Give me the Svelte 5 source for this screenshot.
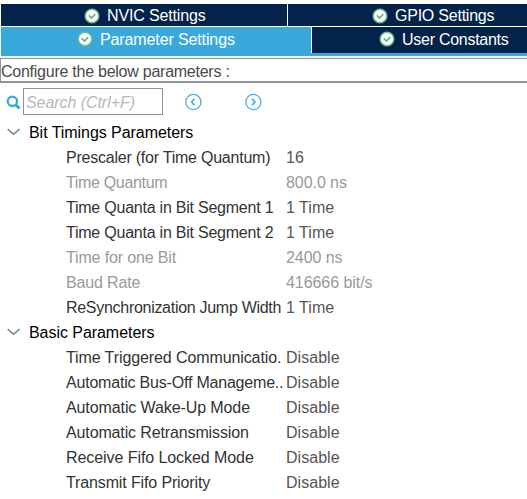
<script>
  // track: letter-spacing in px for each label
  const groups = [
    {
      name: 'Bit Timings Parameters',
      rows: [
        { label: 'Prescaler (for Time Quantum)', track: -0.23, value: '16' },
        { label: 'Time Quantum', track: -0.33, value: '800.0 ns', readonly: true },
        { label: 'Time Quanta in Bit Segment 1', track: -0.23, value: '1 Time' },
        { label: 'Time Quanta in Bit Segment 2', track: -0.23, value: '1 Time' },
        { label: 'Time for one Bit', track: -0.15, value: '2400 ns', readonly: true },
        { label: 'Baud Rate', track: -0.15, value: '416666 bit/s', readonly: true },
        { label: 'ReSynchronization Jump Width', track: -0.29, value: '1 Time' }
      ]
    },
    {
      name: 'Basic Parameters',
      rows: [
        { label: 'Time Triggered Communicatio.', track: -0.1, value: 'Disable' },
        { label: 'Automatic Bus-Off Manageme..', track: -0.2, value: 'Disable' },
        { label: 'Automatic Wake-Up Mode', track: -0.1, value: 'Disable' },
        { label: 'Automatic Retransmission', track: -0.13, value: 'Disable' },
        { label: 'Receive Fifo Locked Mode', track: -0.07, value: 'Disable' },
        { label: 'Transmit Fifo Priority', track: -0.13, value: 'Disable' }
      ]
    }
  ];
</script>

{#snippet check()}
  <svg class="check" width="16" height="16" viewBox="0 0 16 16">
    <circle cx="8" cy="8" r="6.8" fill="#fff" stroke="#6bbd8a" stroke-width="1.5" />
    <path d="M4.8 7.4 7.5 10 11.3 6.2" fill="none" stroke="#5db680" stroke-width="1.7" />
  </svg>
{/snippet}

<main>
  <nav>
    <div class="tabs top">
      <div class="tab nvic">{@render check()}<span>NVIC Settings</span></div>
      <div class="tab gpio">{@render check()}<span>GPIO Settings</span></div>
    </div>
    <div class="tabs bottom">
      <div class="tab param">{@render check()}<span>Parameter Settings</span></div>
      <div class="tab user">{@render check()}<span>User Constants</span></div>
    </div>
  </nav>
  <div class="caption"><span>Configure the below parameters :</span></div>
  <div class="toolbar">
    <svg class="glass" width="15" height="15" viewBox="0 0 15 15" fill="none" stroke="#39a9dc">
      <circle cx="6.4" cy="6.3" r="4.7" stroke-width="2.3" />
      <path d="M9.5 9.6 13.6 13.4" stroke-width="2.8" />
    </svg>
    <div class="search">Search (Ctrl+F)</div>
    <svg class="prev" width="18" height="18" viewBox="0 0 18 18" fill="none" stroke="#45b0df">
      <circle cx="9.4" cy="9" r="7.6" stroke-width="1.3" />
      <path d="M10.6 5.8 7.6 9 10.6 12.2" stroke-width="1.7" />
    </svg>
    <svg class="next" width="18" height="18" viewBox="0 0 18 18" fill="none" stroke="#45b0df">
      <circle cx="9.4" cy="9" r="7.6" stroke-width="1.3" />
      <path d="M8 5.8 11 9 8 12.2" stroke-width="1.7" />
    </svg>
  </div>
  <div class="tree">
    {#each groups as group}
      <div class="group">
        <svg width="14" height="8" viewBox="0 0 14 8" fill="none" stroke="#858585" stroke-width="1.5">
          <path d="M0.6 1.2 6.6 6.2 12.6 1.2" />
        </svg>
        <span>{group.name}</span>
      </div>
      {#each group.rows as row}
        <div class="row" class:readonly={row.readonly}>
          <span class="label" style="letter-spacing: {row.track}px">{row.label}</span>
          <span class="value">{row.value}</span>
        </div>
      {/each}
    {/each}
  </div>
</main>

<style>
  :global(body) { background: #fff; overflow: hidden; }
  main {
    width: 527px;
    height: 499px;
    box-sizing: border-box;
    padding-top: 4px;
    overflow: hidden;
    background: #fff;
    font: 16px/25px "Liberation Sans", Arial, sans-serif;
    color: #333;
  }
  span, .search { white-space: nowrap; }
  nav { margin-left: 1px; }
  .tabs { display: flex; color: #fff; }
  .tab { display: flex; box-sizing: border-box; background: #03234b; height: 22px; line-height: 24px; }
  .top { margin-bottom: 1px; letter-spacing: -0.15px; }
  .check { flex: none; margin: 4px 7px 0 0; }
  .nvic { width: 286px; padding-left: 83px; margin-right: 1px; }
  .gpio { flex: 1; padding-left: 84px; letter-spacing: -0.23px; }
  .bottom { height: 29px; background: #39a9dc; }
  .bottom .tab { height: 26px; line-height: 25px; }
  .param { width: 310px; padding-left: 76px; background: #39a9dc; letter-spacing: -0.12px; }
  .user { flex: 1; border-left: 1px solid #fff; padding-left: 67px; letter-spacing: -0.27px; }
  .caption {
    box-sizing: border-box;
    height: 27px;
    border-top: 2px solid #f0f0f0;
    line-height: 26px;
    color: #4a4a4a;
    letter-spacing: -0.25px;
  }
  .caption span {
    display: block;
    box-sizing: border-box;
    height: 25px;
    border: solid #8f9498;
    border-width: 1px 0 2px 1px;
  }
  .toolbar { display: flex; height: 37px; padding: 5px 0 0 6px; box-sizing: border-box; }
  .glass { margin: 7px 2px 0 0; }
  .search {
    width: 140px;
    height: 27px;
    box-sizing: border-box;
    border: 1px solid #8a949c;
    padding-left: 2px;
    line-height: 27px;
    font-style: italic;
    color: #b8b8b8;
    letter-spacing: -0.06px;
  }
  .prev { margin: 5px 0 0 21px; }
  .next { margin: 5px 0 0 42px; }
  .group { display: flex; height: 25px; padding-left: 7px; color: #000; letter-spacing: -0.05px; }
  .group svg { margin: 8px 8px 0 0; }
  .row { display: flex; height: 25px; padding-left: 66px; }
  .label { width: 220px; flex: none; }
  .value { color: #555; letter-spacing: 0.03px; }
  .readonly .label, .readonly .value { color: #999; }
  .readonly .value { letter-spacing: -0.06px; }
</style>
